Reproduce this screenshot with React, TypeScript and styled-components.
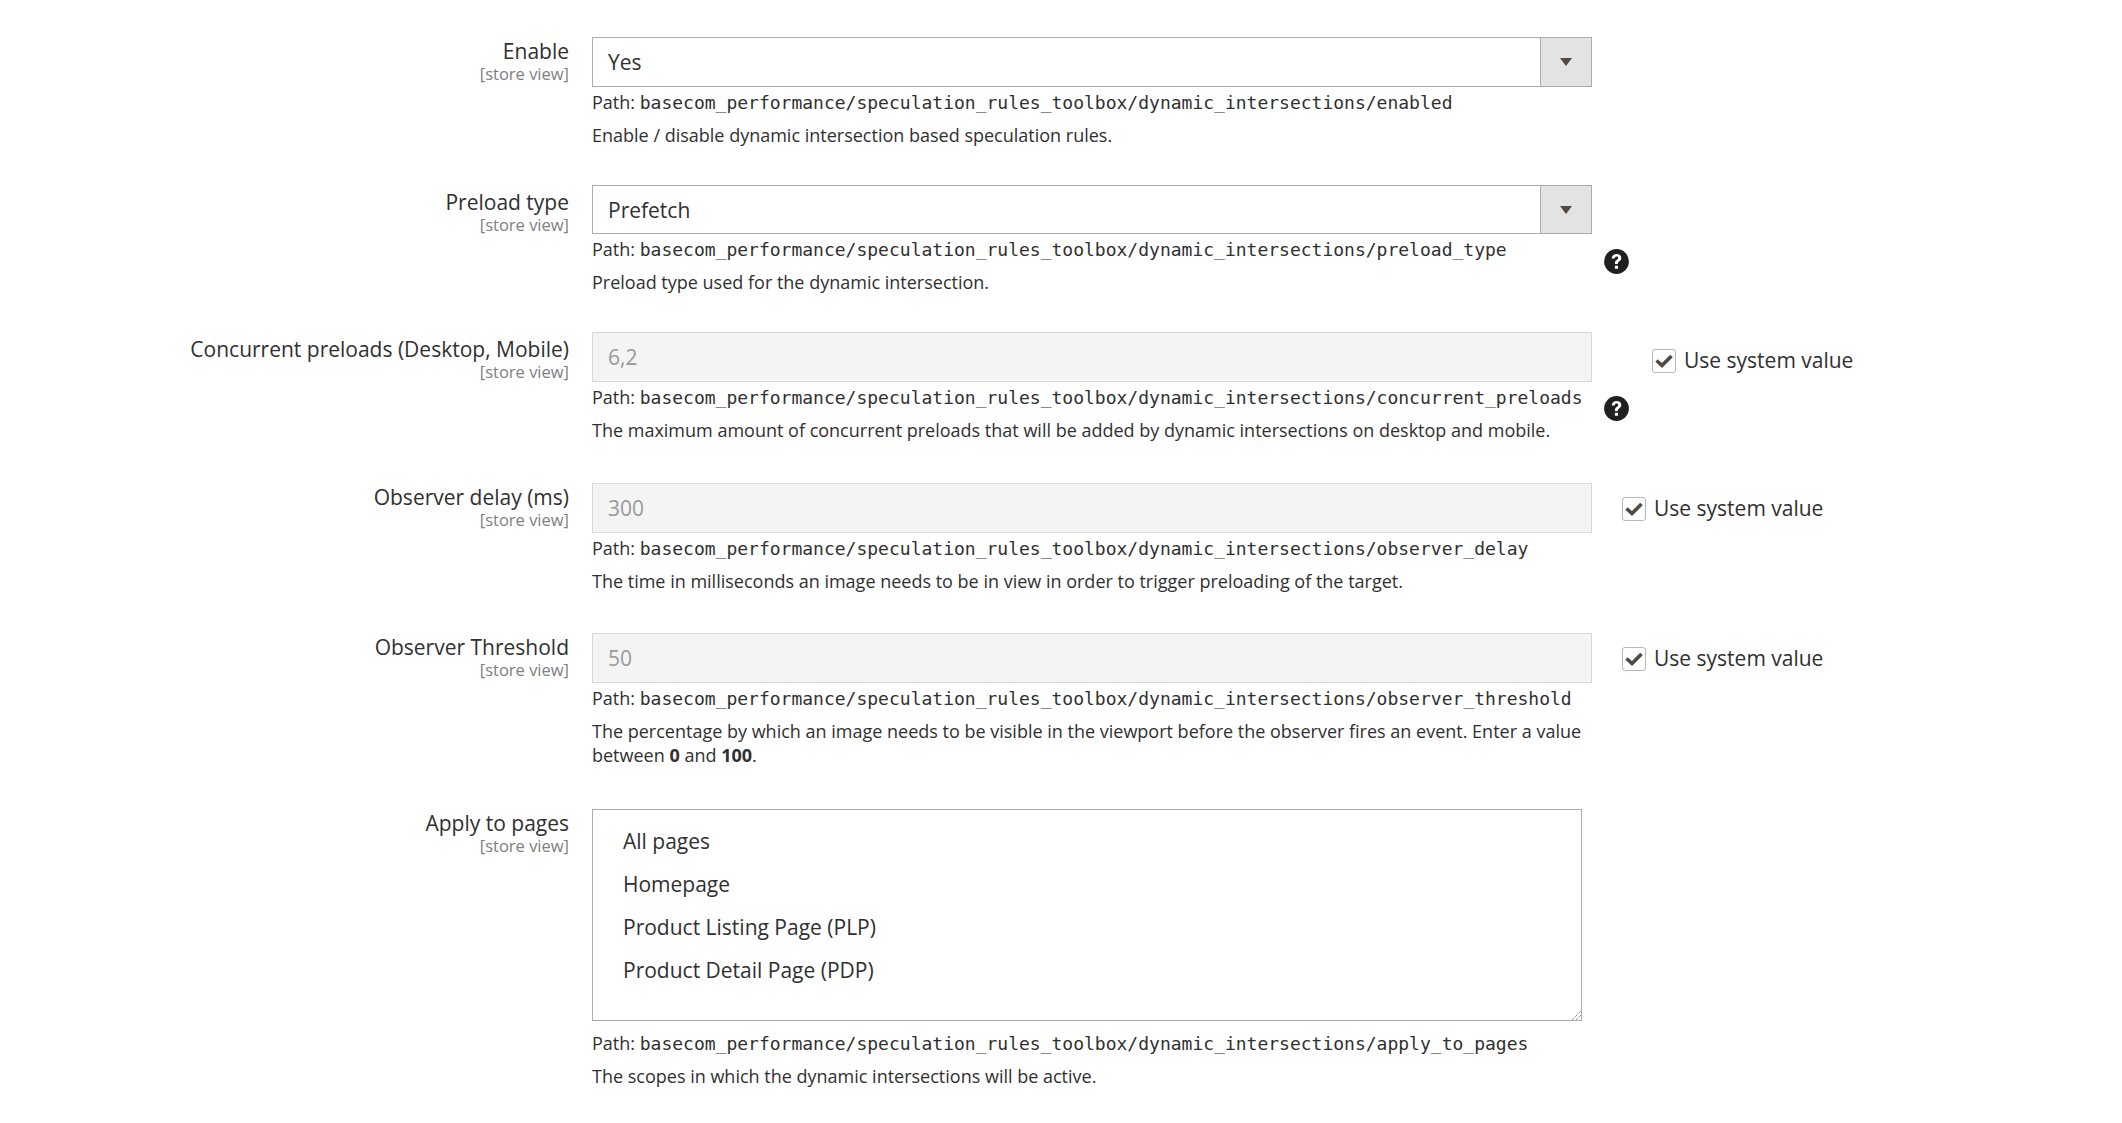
import React from "react";
import styled, { createGlobalStyle } from "styled-components";

const Global = createGlobalStyle`
  html, body { margin: 0; padding: 0; background: #fff; }
  body { font-family: "Open Sans", "Noto Sans", sans-serif; color: #303030; }
`;

const Page = styled.div`
  display: flex;
  flex-direction: column;
  padding-top: 37px;
  height: 1086px;
  overflow: hidden;
`;

const Row = styled.div<{ $h: number }>`
  display: flex;
  align-items: flex-start;
  height: ${(p) => p.$h}px;
`;

const LabelCol = styled.div`
  width: 569px;
  margin-right: 23px;
  text-align: right;
  flex: none;
`;

const Label = styled.div<{ $mt: number }>`
  font-size: 21px;
  line-height: 27px;
  margin-top: ${(p) => p.$mt}px;
  color: #303030;
`;

const Scope = styled.div`
  font-size: 16.5px;
  line-height: 18px;
  color: #808080;
`;

const Control = styled.div`
  width: 1000px;
  flex: none;
`;

const SelectBox = styled.div<{ $h: number }>`
  height: ${(p) => p.$h}px;
  box-sizing: border-box;
  border: 1px solid #adadad;
  display: flex;
  align-items: center;
  font-size: 21px;
  color: #303030;
  padding-left: 15px;
`;

const Arrow = styled.div`
  margin-left: auto;
  width: 50px;
  align-self: stretch;
  background: #e3e3e3;
  border-left: 1px solid #adadad;
  display: flex;
  align-items: center;
  justify-content: center;
  &::after {
    content: "";
    border-left: 6px solid transparent;
    border-right: 6px solid transparent;
    border-top: 8px solid #514943;
  }
`;

const Disabled = styled.div<{ $h: number }>`
  height: ${(p) => p.$h}px;
  box-sizing: border-box;
  border: 1px solid #d9d9d9;
  background: #f4f4f4;
  display: flex;
  align-items: center;
  font-size: 21px;
  color: #999;
  padding-left: 15px;
`;

const MultiBox = styled.div`
  width: 990px;
  height: 212px;
  box-sizing: border-box;
  border: 1px solid #adadad;
  padding: 10px 0 0 30px;
  position: relative;
`;

const Option = styled.div`
  font-size: 21px;
  line-height: 43px;
  color: #303030;
`;

const Grip = styled.svg`
  position: absolute;
  right: 0;
  bottom: 0;
  width: 9px;
  height: 9px;
`;

const PathLine = styled.div<{ $mt: number }>`
  font-size: 18px;
  line-height: 24px;
  margin-top: ${(p) => p.$mt}px;
  color: #303030;
  white-space: nowrap;
`;

const Mono = styled.code`
  font-family: "DejaVu Sans Mono", "Liberation Mono", monospace;
  font-size: 18px;
`;

const Desc = styled.div`
  font-size: 18px;
  line-height: 24px;
  margin-top: 8px;
  color: #303030;
`;

const Side = styled.div`
  display: flex;
  align-items: flex-start;
  flex: none;
`;

const HelpIcon = styled.svg`
  width: 25px;
  height: 25px;
  margin: 64px 0 0 12px;
  flex: none;
`;

const UseSystem = styled.label<{ $ml: number; $mt: number }>`
  display: flex;
  align-items: center;
  margin-left: ${(p) => p.$ml}px;
  margin-top: ${(p) => p.$mt}px;
  font-size: 21px;
  line-height: 26px;
  color: #303030;
`;

const Check = styled.span`
  width: 24px;
  height: 24px;
  box-sizing: border-box;
  border: 1px solid #b8b8b8;
  border-radius: 3px;
  margin: 2px 8px 0 0;
  display: flex;
  align-items: center;
  justify-content: center;
  background: #fff;
`;

const Help = () => (
  <HelpIcon viewBox="0 0 25 25">
    <circle cx="12.5" cy="12.5" r="12.4" fill="#202020" />
    <path
      d="M7.7 9.6c.1-2.7 2-4.5 4.9-4.5 2.8 0 4.7 1.6 4.7 3.9 0 1.7-.9 2.6-2.1 3.4-1.1.8-1.3 1.1-1.3 2.1v.5h-3v-.8c0-1.6.6-2.4 1.7-3.2 1-.7 1.6-1.2 1.6-2 0-.9-.6-1.4-1.6-1.4-1.1 0-1.8.7-1.9 1.9zM10.9 16.7h3.1v3h-3.1z"
      fill="#fff"
    />
  </HelpIcon>
);

const System = ({ ml, mt }: { ml: number; mt: number }) => (
  <UseSystem $ml={ml} $mt={mt}>
    <Check>
      <svg width="18" height="14" viewBox="0 0 18 14">
        <path d="M1.5 6.5 7 11.5 16.5 2" fill="none" stroke="#514943" strokeWidth="3.6" />
      </svg>
    </Check>
    Use system value
  </UseSystem>
);

const prefix = "basecom_performance/speculation_rules_toolbox/dynamic_intersections/";

type FieldProps = {
  h: number;
  label: string;
  labelMt: number;
  path: string;
  pathMt: number;
  children: React.ReactNode;
  desc: React.ReactNode;
  side?: React.ReactNode;
};

const Field = ({ h, label, labelMt, path, pathMt, children, desc, side }: FieldProps) => (
  <Row $h={h}>
    <LabelCol>
      <Label $mt={labelMt}>{label}</Label>
      <Scope>[store view]</Scope>
    </LabelCol>
    <Control>
      {children}
      <PathLine $mt={pathMt}>
        Path: <Mono>{prefix + path}</Mono>
      </PathLine>
      <Desc>{desc}</Desc>
    </Control>
    {side && <Side>{side}</Side>}
  </Row>
);

export default function App() {
  return (
    <Page>
      <Global />
      <Field
        h={148}
        label="Enable"
        labelMt={1}
        path="enabled"
        pathMt={3}
        desc="Enable / disable dynamic intersection based speculation rules."
      >
        <SelectBox $h={50}>
          Yes
          <Arrow />
        </SelectBox>
      </Field>
      <Field
        h={147}
        label="Preload type"
        labelMt={4}
        path="preload_type"
        pathMt={3}
        desc="Preload type used for the dynamic intersection."
        side={<Help />}
      >
        <SelectBox $h={49}>
          Prefetch
          <Arrow />
        </SelectBox>
      </Field>
      <Field
        h={151}
        label="Concurrent preloads (Desktop, Mobile)"
        labelMt={4}
        path="concurrent_preloads"
        pathMt={3}
        desc="The maximum amount of concurrent preloads that will be added by dynamic intersections on desktop and mobile."
        side={
          <>
            <Help />
            <System ml={23} mt={15} />
          </>
        }
      >
        <Disabled $h={50}>6,2</Disabled>
      </Field>
      <Field
        h={150}
        label="Observer delay (ms)"
        labelMt={1}
        path="observer_delay"
        pathMt={3}
        desc="The time in milliseconds an image needs to be in view in order to trigger preloading of the target."
        side={<System ml={30} mt={12} />}
      >
        <Disabled $h={50}>300</Disabled>
      </Field>
      <Field
        h={176}
        label="Observer Threshold"
        labelMt={1}
        path="observer_threshold"
        pathMt={3}
        desc={
          <>
            The percentage by which an image needs to be visible in the viewport before the observer fires an event. Enter a value between <b>0</b> and <b>100</b>.
          </>
        }
        side={<System ml={30} mt={12} />}
      >
        <Disabled $h={50}>50</Disabled>
      </Field>
      <Field
        h={280}
        label="Apply to pages"
        labelMt={1}
        path="apply_to_pages"
        pathMt={10}
        desc="The scopes in which the dynamic intersections will be active."
      >
        <MultiBox>
          <Option>All pages</Option>
          <Option>Homepage</Option>
          <Option>Product Listing Page (PLP)</Option>
          <Option>Product Detail Page (PDP)</Option>
          <Grip viewBox="0 0 9 9">
            <path d="M0 9 9 0M4 9l5-5" stroke="#666" strokeWidth="1" strokeDasharray="1 1" />
          </Grip>
        </MultiBox>
      </Field>
    </Page>
  );
}
